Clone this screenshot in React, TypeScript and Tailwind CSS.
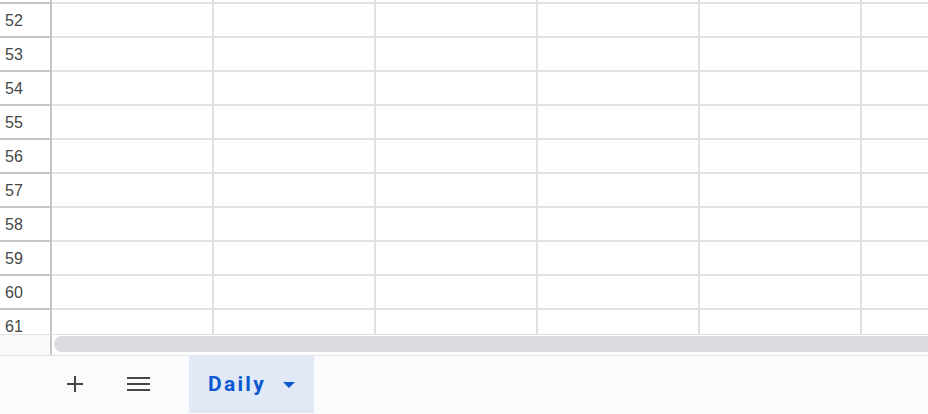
import React from "react";

const rows = [51, 52, 53, 54, 55, 56, 57, 58, 59, 60, 61];
const cols = [0, 1, 2, 3, 4, 5];

export default function App() {
    return (
        <div className="w-[928px] h-[414px] overflow-hidden bg-white flex flex-col font-['Liberation_Sans',Arial,sans-serif]">

            {/* Grid */}
            <div className="h-[335px] shrink-0 overflow-hidden border-b border-[#e1e1e1]">
                <div className="-mt-[30px]">
                    {rows.map((r) => (
                        <div key={r} className="flex h-[34px]">
                            <div className="w-[52px] shrink-0 border-r-2 border-b-2 border-[#c4c7c5] bg-white flex items-center pl-[5px] pt-[1px] text-[16px] text-[#444746]">
                                {r > 51 ? r : ""}
                            </div>
                            {cols.map((c) => (
                                <div
                                    key={c}
                                    className="w-[162px] shrink-0 border-r-2 border-b-2 border-[#e1e1e1]"
                                />
                            ))}
                        </div>
                    ))}
                </div>
            </div>

            {/* Horizontal scrollbar */}
            <div className="h-[20px] shrink-0 flex">
                <div className="w-[52px] shrink-0 bg-[#f8f9fa] border-r-2 border-[#c4c7c5]" />
                <div className="flex-1 pl-[2px] pt-[1px]">
                    <div className="h-[16px] w-[1000px] rounded-full bg-[#dadce0]" />
                </div>
            </div>

            {/* Sheet tabs */}
            <div className="flex-1 border-t border-[#e3e3e3] bg-[#f9fbfd] flex items-start">
                <div className="h-[56px] w-[189px] flex items-center">
                    <svg width="18" height="18" viewBox="0 0 18 18" className="ml-[66px]">
                        <path d="M9 1v16M1 9h16" stroke="#444746" strokeWidth="2" />
                    </svg>
                    <svg width="24" height="16" viewBox="0 0 24 16" className="ml-[43px]">
                        <path d="M0 2h23M0 8h23M0 14h23" stroke="#444746" strokeWidth="2" />
                    </svg>
                </div>
                <div className="h-[57px] w-[125px] bg-[#e1e9f7] flex items-center pl-[19px]">
                    <span className="font-['Roboto',sans-serif] font-bold text-[21px] tracking-[2.3px] text-[#0b57d0] pt-[1px]">
                        Daily
                    </span>
                    <svg width="14" height="7" viewBox="0 0 14 7" className="ml-[16px] mt-[1px]">
                        <path d="M1 0h12L7 6z" fill="#0b57d0" />
                    </svg>
                </div>
            </div>

        </div>
    );
}
